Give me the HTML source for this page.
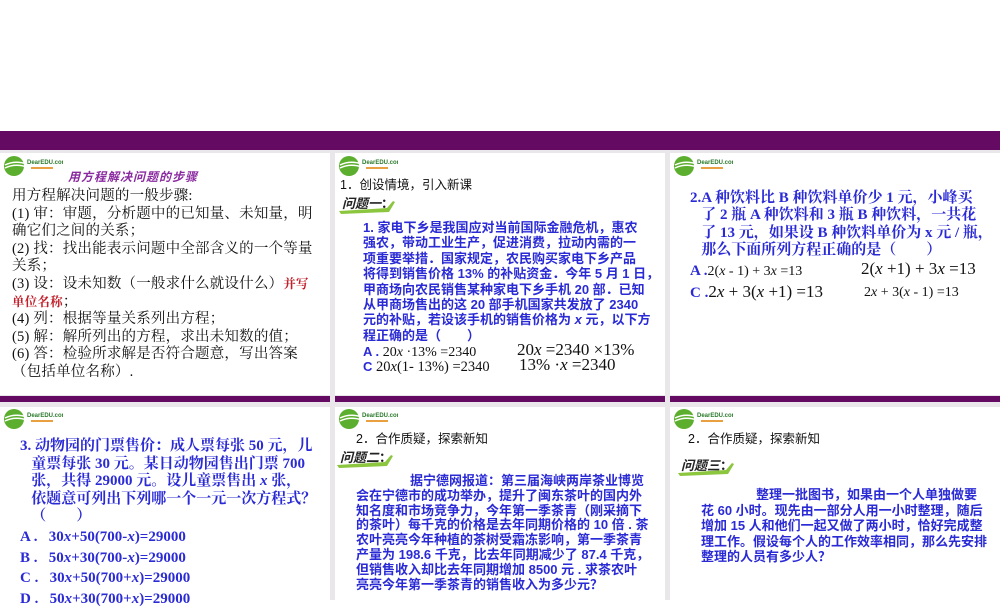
<!DOCTYPE html>
<html><head><meta charset="utf-8"><style>
body{margin:0;width:1000px;height:600px;overflow:hidden;background:#fff;position:relative;font-family:"Liberation Sans","Noto Sans CJK SC",sans-serif}
.a{position:absolute}
.band{background:#650a62}
.panel{position:absolute;background:#fff}
.g{background:#e9e7ea}
.t{position:absolute;white-space:nowrap}
.blue{color:#2b2bd6;font-weight:bold}
.ser{font-family:"Liberation Serif","Noto Serif CJK SC",serif}
.logo{position:absolute;width:60px;height:22px}
.wt{position:absolute;font-family:"Liberation Sans","Noto Sans CJK SC",sans-serif;font-weight:bold;font-style:italic;font-size:13px;color:#222}
.nw{position:absolute;white-space:nowrap}
</style></head><body>
<div class="a g" style="left:0;top:150px;width:1000px;height:450px"></div>
<div class="a band" style="left:0;top:131px;width:1000px;height:19px"></div>
<div class="panel" style="left:0;top:153px;width:330px;height:242px"></div>
<div class="panel" style="left:335px;top:153px;width:330px;height:242px"></div>
<div class="panel" style="left:670px;top:153px;width:330px;height:242px"></div>
<div class="a band" style="left:0;top:396px;width:330px;height:6px"></div>
<div class="a band" style="left:335px;top:396px;width:330px;height:6px"></div>
<div class="a band" style="left:670px;top:396px;width:330px;height:6px"></div>
<div class="panel" style="left:0;top:407px;width:330px;height:193px"></div>
<div class="panel" style="left:335px;top:407px;width:330px;height:193px"></div>
<div class="panel" style="left:670px;top:407px;width:330px;height:193px"></div>

<svg width="0" height="0" style="position:absolute"><defs><g id="lg">
<circle cx="11" cy="11" r="10" fill="#5cae2e"/>
<path d="M2 10 Q12 5 24 9 M2 13 Q12 8 24 12" stroke="#fff" stroke-width="1.5" fill="none"/>
<text x="24" y="9" font-size="6" font-weight="bold" fill="#2a7a2a" font-family="Liberation Sans">DearEDU.com</text>
<rect x="28" y="12" width="22" height="2" fill="#e8a040"/>
</g>
<g id="wt"><path d="M0 16 L48 13 L54 6 L56 7 L50 17 L2 19Z" fill="#8cc63f"/></g>
</defs></svg>
<svg class="logo" style="left:3px;top:155px"><use href="#lg"/></svg>
<svg class="logo" style="left:338px;top:155px"><use href="#lg"/></svg>
<svg class="logo" style="left:673px;top:155px"><use href="#lg"/></svg>
<svg class="logo" style="left:3px;top:408px"><use href="#lg"/></svg>
<svg class="logo" style="left:338px;top:408px"><use href="#lg"/></svg>
<svg class="logo" style="left:673px;top:408px"><use href="#lg"/></svg>

<!-- panel1 -->
<div class="t" style="left:68px;top:168px;font-size:12px;font-weight:bold;font-style:italic;color:#8a2aa0;letter-spacing:1px">用方程解决问题的步骤</div>
<div class="nw ser" style="left:12px;top:188px;font-size:14.5px;line-height:17.6px;color:#111;letter-spacing:0.2px">
用方程解决问题的一般步骤:<br>
(1) 审：审题，分析题中的已知量、未知量，明<br>
确它们之间的关系；<br>
(2) 找：找出能表示问题中全部含义的一个等量<br>
关系；<br>
(3) 设：设未知数（一般求什么就设什么）<b style="color:#c0202a;font-size:12.5px">并写</b><br>
<b style="color:#c0202a;font-size:12.5px">单位名称</b>；<br>
(4) 列：根据等量关系列出方程；<br>
(5) 解：解所列出的方程，求出未知数的值；<br>
(6) 答：检验所求解是否符合题意，写出答案<br>
（包括单位名称）.
</div>

<!-- panel2 -->
<div class="t" style="left:340px;top:174px;font-size:12.5px;color:#111">1．创设情境，引入新课</div>
<svg class="a" style="left:339px;top:195px" width="60" height="20"><use href="#wt"/></svg>
<div class="wt" style="left:342px;top:193px">问题一<span style="font-style:normal">：</span></div>
<div class="nw blue" style="left:363px;top:220px;font-size:13px;line-height:15.4px">
1. 家电下乡是我国应对当前国际金融危机，惠农<br>
强农，带动工业生产，促进消费，拉动内需的一<br>
项重要举措．国家规定，农民购买家电下乡产品<br>
将得到销售价格 13% 的补贴资金．今年 5 月 1 日，<br>
甲商场向农民销售某种家电下乡手机 20 部．已知<br>
从甲商场售出的这 20 部手机国家共发放了 2340<br>
元的补贴，若设该手机的销售价格为 <i>x</i> 元，以下方<br>
程正确的是（　　）</div>
<div class="t blue" style="left:363px;top:344px;font-size:13px">A . <span class="ser" style="font-weight:normal;color:#111;font-size:14px">20<i>x</i> ·13% =2340</span></div>
<div class="t ser" style="left:517px;top:340px;font-size:17px;color:#111">20<i>x</i> =2340 ×13%</div>
<div class="t blue" style="left:363px;top:359px;font-size:13px">C <span class="ser" style="font-weight:normal;color:#111;font-size:14.5px">20<i>x</i>(1- 13%) =2340</span></div>
<div class="t ser" style="left:519px;top:355px;font-size:17px;color:#111">13% ·<i>x</i> =2340</div>

<!-- panel3 -->
<div class="nw blue ser" style="left:690px;top:190px;font-size:15px;line-height:17.3px">
2.A 种饮料比 B 种饮料单价少 1 元，小峰买<br>
&nbsp;&nbsp;&nbsp;了 2 瓶 A 种饮料和 3 瓶 B 种饮料，一共花<br>
&nbsp;&nbsp;&nbsp;了 13 元，如果设 B 种饮料单价为 x 元 / 瓶，<br>
&nbsp;&nbsp;&nbsp;那么下面所列方程正确的是（　　）</div>
<div class="t ser" style="left:690px;top:263px;font-size:14px;color:#111"><b style="color:#2b2bd6;font-size:15px">A .</b>2(<i>x</i> - 1) + 3<i>x</i> =13</div>
<div class="t ser" style="left:861px;top:259px;font-size:17px;color:#111">2(<i>x</i> +1) + 3<i>x</i> =13</div>
<div class="t ser" style="left:690px;top:282px;font-size:17px;color:#111"><b style="color:#2b2bd6;font-size:15px">C .</b>2<i>x</i> + 3(<i>x</i> +1) =13</div>
<div class="t ser" style="left:864px;top:285px;font-size:14px;color:#111">2<i>x</i> + 3(<i>x</i> - 1) =13</div>

<!-- row2 panel1 -->
<div class="nw blue ser" style="left:20px;top:438px;font-size:15px;line-height:17.6px">
3. 动物园的门票售价：成人票每张 50 元，儿<br>
&nbsp;&nbsp;&nbsp;童票每张 30 元。某日动物园售出门票 700<br>
&nbsp;&nbsp;&nbsp;张，共得 29000 元。设儿童票售出 <i>x</i> 张，<br>
&nbsp;&nbsp;&nbsp;依题意可列出下列哪一个一元一次方程式？<br>
&nbsp;&nbsp;&nbsp;（　　）</div>
<div class="nw blue ser" style="left:20px;top:527px;font-size:15px;line-height:20.5px">
A .&nbsp;&nbsp; 30<i>x</i>+50(700-<i>x</i>)=29000<br>
B .&nbsp;&nbsp; 50<i>x</i>+30(700-<i>x</i>)=29000<br>
C .&nbsp;&nbsp; 30<i>x</i>+50(700+<i>x</i>)=29000<br>
D .&nbsp;&nbsp; 50<i>x</i>+30(700+<i>x</i>)=29000</div>

<!-- row2 panel2 -->
<div class="t" style="left:356px;top:428px;font-size:12.5px;color:#111">2．合作质疑，探索新知</div>
<svg class="a" style="left:337px;top:449px" width="60" height="20"><use href="#wt"/></svg>
<div class="wt" style="left:340px;top:447px">问题二<span style="font-style:normal">：</span></div>
<div class="nw blue" style="left:356px;top:474px;font-size:13px;line-height:14.8px">
<span style="padding-left:54px"></span>据宁德网报道：第三届海峡两岸茶业博览<br>
会在宁德市的成功举办，提升了闽东茶叶的国内外<br>
知名度和市场竞争力，今年第一季茶青（刚采摘下<br>
的茶叶）每千克的价格是去年同期价格的 10 倍 . 茶<br>
农叶亮亮今年种植的茶树受霜冻影响，第一季茶青<br>
产量为 198.6 千克，比去年同期减少了 87.4 千克，<br>
但销售收入却比去年同期增加 8500 元 . 求茶农叶<br>
亮亮今年第一季茶青的销售收入为多少元？</div>

<!-- row2 panel3 -->
<div class="t" style="left:688px;top:428px;font-size:12.5px;color:#111">2．合作质疑，探索新知</div>
<svg class="a" style="left:678px;top:457px" width="60" height="20"><use href="#wt"/></svg>
<div class="wt" style="left:681px;top:455px">问题三<span style="font-style:normal">：</span></div>
<div class="nw blue" style="left:701px;top:487px;font-size:13px;line-height:15.6px">
<span style="padding-left:55px"></span>整理一批图书，如果由一个人单独做要<br>
花 60 小时。现先由一部分人用一小时整理，随后<br>
增加 15 人和他们一起又做了两小时，恰好完成整<br>
理工作。假设每个人的工作效率相同，那么先安排<br>
整理的人员有多少人？</div>
</body></html>
